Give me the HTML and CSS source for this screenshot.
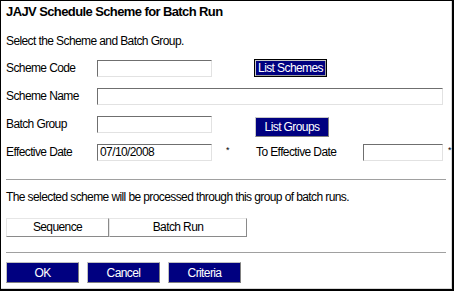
FILE: index.html
```html
<!DOCTYPE html>
<html>
<head>
<meta charset="utf-8">
<link rel="stylesheet" href="styles.css">
</head>
<body>
<div class="frame">
  <div class="title">JAJV Schedule Scheme for Batch Run</div>
  <div class="intro">Select the Scheme and Batch Group.</div>
  <div class="form">
    <div class="lbl">Scheme Code</div>
    <div class="field"><input class="inp short" type="text"></div>
    <div></div>
    <div class="btncell"><button class="btn list">List Schemes</button></div>
    <div></div>
    <div></div>

    <div class="lbl">Scheme Name</div>
    <div class="field span"><input class="inp wide" type="text"></div>
    <div></div>

    <div class="lbl">Batch Group</div>
    <div class="field"><input class="inp short" type="text"></div>
    <div></div>
    <div class="btncell"><button class="btn groups">List Groups</button></div>
    <div></div>
    <div></div>

    <div class="lbl">Effective Date</div>
    <div class="field"><input class="inp short" type="text" value="07/10/2008"></div>
    <div class="star">*</div>
    <div class="lbl">To Effective Date</div>
    <div class="field"><input class="inp date" type="text"></div>
    <div class="star end">*</div>
  </div>
  <div class="rule"></div>
  <div class="note">The selected scheme will be processed through this group of batch runs.</div>
  <div class="table">
    <div class="th seq">Sequence</div>
    <div class="th run">Batch Run</div>
  </div>
  <div class="rule second"></div>
  <div class="actions">
    <button class="btn act">OK</button>
    <button class="btn act">Cancel</button>
    <button class="btn act">Criteria</button>
  </div>
</div>
</body>
</html>
```
FILE: styles.css
```css
html, body {
  margin: 0;
  padding: 0;
  background: #ffffff;
}
body {
  font-family: "Liberation Sans", Arial, sans-serif;
  font-size: 12px;
  letter-spacing: -0.6px;
  color: #000;
}
.frame {
  box-sizing: border-box;
  width: 454px;
  height: 291px;
  border-top: 1px solid #000;
  border-left: 1px solid #000;
  border-right: 2px solid #000;
  border-bottom: 2px solid #000;
  box-shadow: inset -1px -1px 0 #d8d8d8;
  padding: 0 0 0 5px;
  overflow: hidden;
}
.title {
  font-weight: bold;
  font-size: 13px;
  line-height: 16px;
  margin-top: 3px;
}
.intro {
  line-height: 14px;
  margin-top: 14px;
}
.form {
  display: grid;
  grid-template-columns: 91px 115px 44px 107px 80px 1fr;
  grid-auto-rows: 28px;
  align-items: center;
  margin-top: 6px;
}
.lbl {
  line-height: 14px;
  white-space: nowrap;
}
.field {
  display: flex;
}
.span {
  grid-column: 2 / 6;
}
.inp {
  box-sizing: border-box;
  height: 17px;
  padding: 0 2px;
  margin: 0;
  border-top: 1px solid #6f6f6f;
  border-left: 1px solid #6f6f6f;
  border-right: 1px solid #e2e2e2;
  border-bottom: 1px solid #e2e2e2;
  font-family: "Liberation Sans", Arial, sans-serif;
  font-size: 12px;
  letter-spacing: -0.6px;
  background: #fff;
  color: #000;
  outline: none;
}
.short { width: 115px; }
.wide { width: 346px; }
.date { width: 80px; }
.star {
  font-size: 9px;
  padding-left: 14px;
  margin-top: -4px;
}
.star.end {
  padding-left: 5px;
}
.btncell {
  display: flex;
}
.btn {
  box-sizing: border-box;
  margin: 0;
  background: #000080;
  color: #fff;
  font-family: "Liberation Sans", Arial, sans-serif;
  font-size: 12px;
  letter-spacing: -0.6px;
  white-space: nowrap;
  padding: 0;
  cursor: default;
}
.list {
  width: 73px;
  height: 18px;
  border: 1px solid #000;
  box-shadow: inset 1px 1px 0 #c8c8c8, inset -1px -1px 0 #9a9a9a;
  margin-top: -1px;
  margin-left: -2px;
}
.groups {
  width: 74px;
  height: 20px;
  margin-top: 5px;
  margin-left: -1px;
  border-top: 1px solid #c8c8c8;
  border-left: 1px solid #c8c8c8;
  border-right: 1px solid #808080;
  border-bottom: 1px solid #808080;
}
.rule {
  width: 440px;
  height: 1px;
  background: #a0a0a0;
  border-bottom: 1px solid #fff;
  margin-top: 13px;
}
.note {
  line-height: 14px;
  margin-top: 9px;
}
.table {
  display: flex;
  margin-top: 14px;
  width: 241px;
}
.th {
  box-sizing: border-box;
  height: 19px;
  line-height: 17px;
  text-align: center;
  border-top: 1px solid #e6e6e6;
  border-left: 1px solid #e6e6e6;
  border-right: 1px solid #8a8a8a;
  border-bottom: 1px solid #8a8a8a;
}
.seq { width: 103px; }
.run { width: 138px; }
.rule.second {
  margin-top: 15px;
}
.actions {
  display: flex;
  gap: 8px;
  margin-top: 8px;
}
.act {
  width: 73px;
  height: 21px;
  border-top: 1px solid #c0c0c0;
  border-left: 1px solid #c0c0c0;
  border-right: 1px solid #808080;
  border-bottom: 1px solid #808080;
}
```
